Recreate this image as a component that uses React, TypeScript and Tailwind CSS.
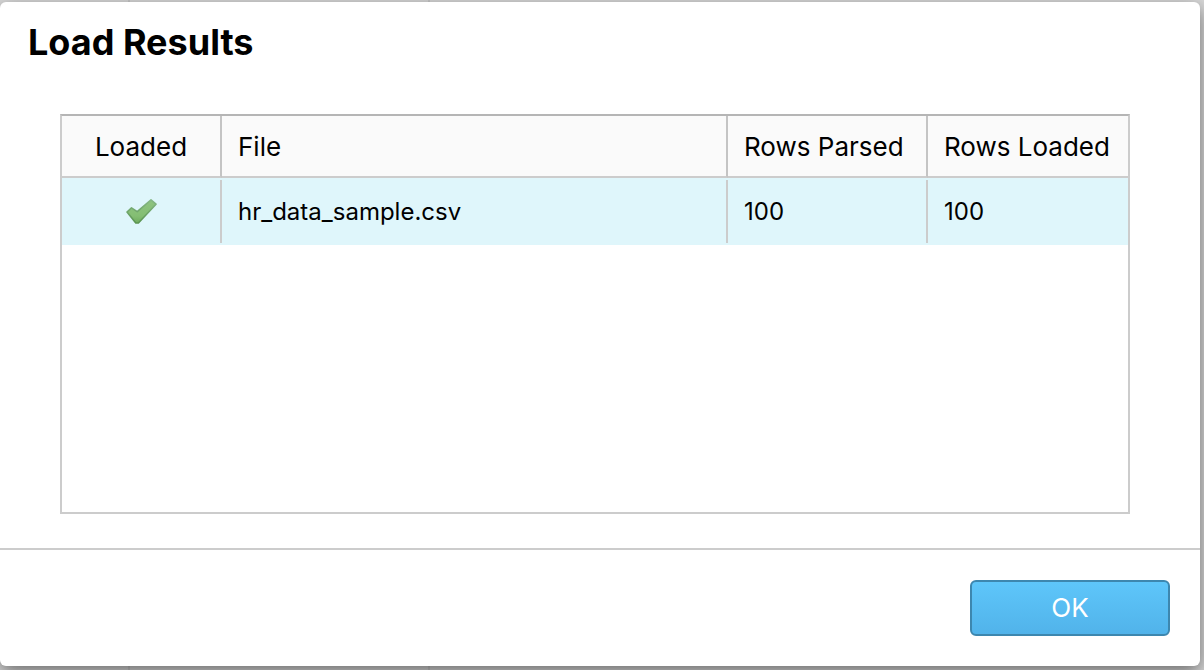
const results = [{ file: "hr_data_sample.csv", parsed: 100, loaded: 100 }];

function CheckMark() {
  return (
    <svg width="32" height="28" viewBox="0 0 32 28" role="img" aria-label="Loaded">
      <defs>
        <linearGradient id="check-fill" x1="0" y1="0" x2="0" y2="1">
          <stop offset="0" stopColor="#8fc381" />
          <stop offset="0.7" stopColor="#84be73" />
          <stop offset="1" stopColor="#6fab5e" />
        </linearGradient>
        <linearGradient id="check-edge" x1="0" y1="0" x2="0" y2="1">
          <stop offset="0" stopColor="#86b886" />
          <stop offset="1" stopColor="#5a9450" />
        </linearGradient>
      </defs>
      <path
        d="M2 14 L6.5 9.8 L12.2 13.6 L26 1.8 L31 6.2 L13.4 25 L10.8 25 Z"
        fill="url(#check-fill)"
        stroke="url(#check-edge)"
        strokeWidth="1.6"
        strokeLinejoin="round"
      />
    </svg>
  );
}

const headCell = "border-r-2 border-b-2 border-r-[#c4c4c4] border-b-[#cccccc] px-4 text-left font-normal whitespace-nowrap last:border-r-0";
const rowCell = "py-0.5 px-0";
const rowInner = "flex h-[63px] items-center border-r-2 border-[#cccccc] px-4";

export default function App() {
  return (
    <div className="relative flex min-h-screen flex-col overflow-hidden bg-[#d8d8d8] pt-0.5 pr-1 pb-1 font-['Inter','Liberation_Sans',sans-serif] text-black">
      <div className="absolute inset-y-0 left-32 w-75.5 border-x-2 border-[#c8c8c8]" />
      <section
        role="dialog"
        aria-labelledby="dialog-title"
        className="relative flex grow flex-col rounded-md bg-white shadow-[0_6px_18px_rgba(0,0,0,0.5)]"
      >
        <h1 id="dialog-title" className="px-7 pt-5 text-[36px] leading-10 font-bold">
          Load Results
        </h1>
        <div className="mt-13 mr-[70px] mb-[34px] ml-15 grow border-2 border-t-[#b5b5b5] border-[#cccccc]">
          <table className="w-full table-fixed border-separate border-spacing-0">
            <colgroup>
              <col className="w-40" />
              <col />
              <col className="w-50" />
              <col className="w-50" />
            </colgroup>
            <thead>
              <tr className="h-[62px] bg-[#fafafa] text-[26px]">
                <th className={headCell + " text-center!"}>Loaded</th>
                <th className={headCell}>File</th>
                <th className={headCell}>Rows Parsed</th>
                <th className={headCell}>Rows Loaded</th>
              </tr>
            </thead>
            <tbody>
              {results.map((r) => (
                <tr key={r.file} className="bg-[#dff6fb] text-[24px]">
                  <td className={rowCell}>
                    <div className={rowInner + " justify-center"}>
                      <CheckMark />
                    </div>
                  </td>
                  <td className={rowCell}>
                    <div className={rowInner}>{r.file}</div>
                  </td>
                  <td className={rowCell}>
                    <div className={rowInner}>{r.parsed}</div>
                  </td>
                  <td className={rowCell}>
                    <div className="flex h-[63px] items-center px-4">{r.loaded}</div>
                  </td>
                </tr>
              ))}
            </tbody>
          </table>
        </div>
        <footer className="flex justify-end border-t-2 border-[#cccccc] p-[30px]">
          <button
            type="button"
            className="h-14 w-50 rounded-md border-2 border-[#3d87af] bg-linear-to-b from-[#5ec6fa] to-[#51b3ea] pb-0.5 text-[26px] text-white"
          >
            OK
          </button>
        </footer>
      </section>
    </div>
  );
}
